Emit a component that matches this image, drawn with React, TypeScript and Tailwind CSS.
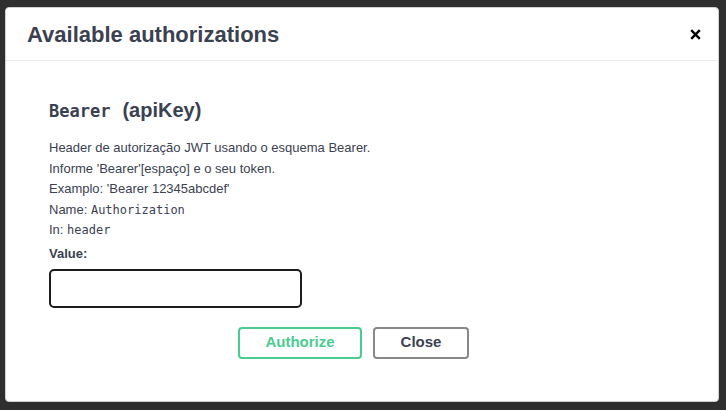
const App = () => {
  return (
    <div className="w-[726px] h-[410px] bg-[#2f2f2f] pt-[7px] pl-[5px] overflow-hidden font-['Liberation_Sans',Arial,sans-serif]">
      <div className="w-[714px] h-[395px] bg-white rounded-[4px] border border-[#d0d0d0] flex flex-col">
        {/* Header */}
        <div className="h-[53px] shrink-0 flex items-center justify-between pl-[21px] pr-[16px] border-b border-[#ececec]">
          <h3 className="text-[22px] font-bold text-[#3b4151]">Available authorizations</h3>
          <button className="w-[14px] h-[14px] flex items-center justify-center">
            <svg width="11" height="11" viewBox="0 0 11 11">
              <path d="M1.2 1.2 L9.8 9.8 M9.8 1.2 L1.2 9.8" stroke="#000" strokeWidth="2.4" strokeLinecap="butt" />
            </svg>
          </button>
        </div>

        {/* Body */}
        <div className="pl-[43px] pr-[20px] pt-[37px]">
          <h4 className="text-[20px] font-bold text-[#3b4151] leading-[24px]">
            <code className="font-['DejaVu_Sans_Mono',monospace] text-[17px]">Bearer</code>
            <span className="ml-[12px]">(apiKey)</span>
          </h4>
          <div className="mt-[15px] text-[13px] leading-[20.5px] text-[#3b4151]">
            <p>Header de autorização JWT usando o esquema Bearer.</p>
            <p>Informe 'Bearer'[espaço] e o seu token.</p>
            <p>Examplo: 'Bearer 12345abcdef'</p>
            <p>
              Name: <code className="font-['DejaVu_Sans_Mono',monospace] text-[12px]">Authorization</code>
            </p>
            <p>
              In: <code className="font-['DejaVu_Sans_Mono',monospace] text-[12px]">header</code>
            </p>
          </div>
          <label className="block mt-[3px] text-[13px] font-bold text-[#3b4151] leading-[20px]">Value:</label>
          <input
            type="text"
            className="mt-[5px] block w-[253px] h-[39px] rounded-[5px] border-2 border-[#1c1c1c] bg-white px-2 text-sm outline-none"
          />
          <div className="mt-[19px] flex gap-[11px] pl-[189px]">
            <button className="w-[124px] h-[32px] rounded-[4px] border-2 border-[#49cc90] text-[#49cc90] text-[15px] font-bold">
              Authorize
            </button>
            <button className="w-[96px] h-[32px] rounded-[4px] border-2 border-[#888888] text-[#3b4151] text-[15px] font-bold">
              Close
            </button>
          </div>
        </div>
      </div>
    </div>
  );
};

export default App;
